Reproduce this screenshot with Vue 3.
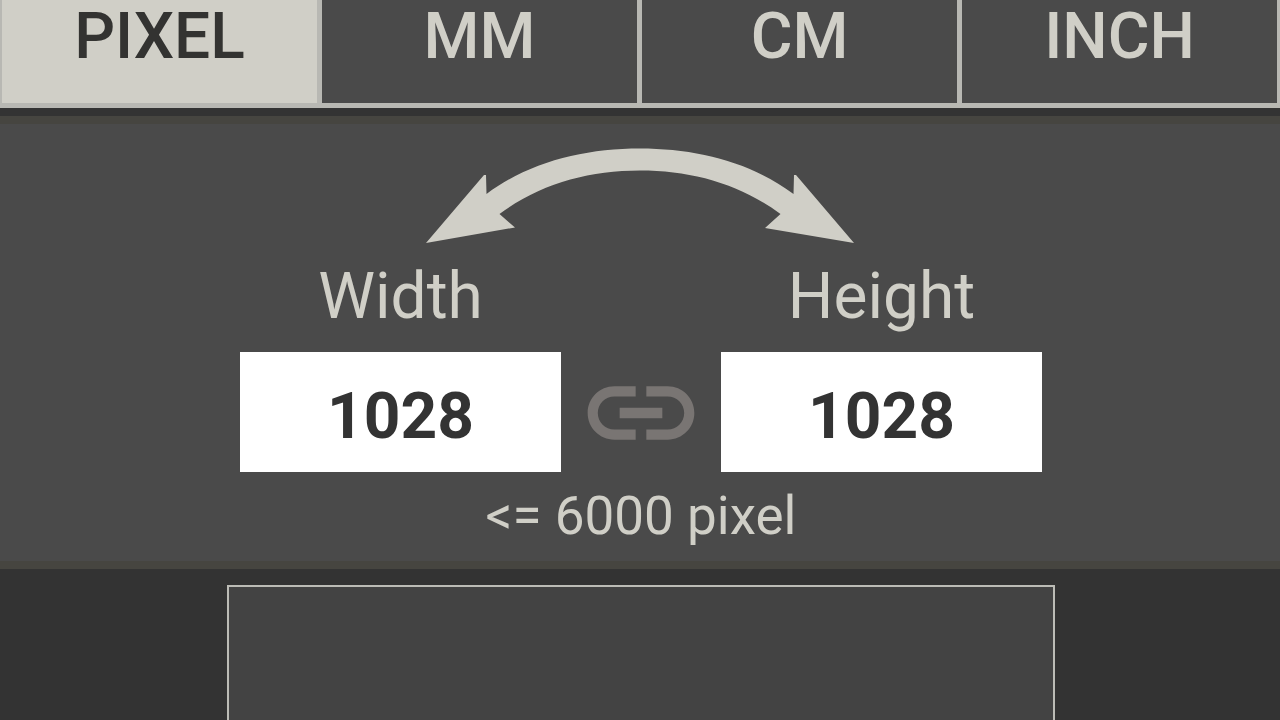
<script setup>
import { ref } from 'vue'

const units = ['PIXEL', 'MM', 'CM', 'INCH']
const unit = ref('PIXEL')
const width = ref('1028')
const height = ref('1028')
const linked = ref(false)

function swap() {
  const previous = width.value
  width.value = height.value
  height.value = previous
}
</script>

<template>
  <main class="page">
    <nav class="units" aria-label="Unit">
      <button
        v-for="name in units"
        :key="name"
        type="button"
        class="unit"
        :class="{ active: unit === name }"
        :aria-pressed="unit === name"
        @click="unit = name"
      >{{ name }}</button>
    </nav>

    <section class="panel">
      <button type="button" class="swap" aria-label="Swap width and height" @click="swap">
        <svg width="428" height="96" viewBox="426 148 428 96" aria-hidden="true">
          <path d="M426 243 L484 175 L486 175 L486.500 194 C529 162 584 148.500 640 148.500 S751 162 793.500 194 L794 175 L796 175 L854 243 L765 228 L780.500 214 C740 184 692 170.500 640 170.500 S540 184 499.500 214 L515 227.500 Z" />
        </svg>
      </button>

      <div class="fields">
        <label class="caption" for="size-width">Width</label>
        <label class="caption second" for="size-height">Height</label>
        <input id="size-width" v-model="width" class="value" type="text" inputmode="numeric" />
        <button type="button" class="link" aria-label="Keep proportions" :aria-pressed="linked" @click="linked = !linked">
          <svg width="128" height="128" viewBox="0 0 24 24" aria-hidden="true">
            <path d="M3.900 12c0-1.710 1.390-3.100 3.100-3.100h4V7H7c-2.760 0-5 2.240-5 5s2.240 5 5 5h4v-1.900H7c-1.710 0-3.100-1.390-3.100-3.100zM8 13h8v-2H8v2zm9-6h-4v1.900h4c1.710 0 3.100 1.390 3.100 3.100s-1.390 3.100-3.100 3.100h-4V17h4c2.760 0 5-2.240 5-5s-2.240-5-5-5z" />
          </svg>
        </button>
        <input id="size-height" v-model="height" class="value" type="text" inputmode="numeric" />
      </div>

      <p class="limit">&lt;= 6000 pixel</p>
    </section>

    <section class="preview" aria-label="Preview">
      <div class="canvas"></div>
    </section>
  </main>
</template>

<style>
body {
  margin: 0;
  background: #333333;
}
</style>

<style scoped>
.page {
  display: flex;
  flex-direction: column;
  min-height: 100vh;
  background: #333333;
  color: #d0cfc7;
  font-family: Roboto, "Liberation Sans", sans-serif;
}

button {
  margin: 0;
  border: 0;
  background: none;
  font-family: inherit;
  cursor: pointer;
}

.units {
  display: grid;
  grid-template-columns: repeat(4, 1fr);
  gap: 5px;
  padding: 0 3px 5px 2px;
  background: #b8b8b3;
}

.unit {
  padding: 5px 0 34px;
  background: #4a4a4a;
  color: #d0cfc7;
  font-size: 64px;
  font-weight: 500;
  line-height: 64px;
}

.unit.active {
  background: #d0cfc7;
  color: #333331;
}

.panel {
  display: flex;
  flex-direction: column;
  margin-top: 8px;
  padding: 24px 0 13px;
  border-top: 8px solid #464540;
  border-bottom: 8px solid #464540;
  background: #4a4a4a;
}

.swap {
  align-self: center;
  padding: 0;
}

svg {
  display: block;
}

.swap svg {
  fill: #d0cfc7;
}

.fields {
  display: grid;
  grid-template-columns: 1fr 160px 1fr;
  row-gap: 23px;
  margin-top: 21px;
  padding: 0 238px 0 240px;
}

.caption {
  font-size: 64px;
  line-height: 64px;
  text-align: center;
}

.caption.second {
  grid-column: 3;
}

.value {
  box-sizing: border-box;
  width: 100%;
  min-width: 0;
  height: 120px;
  margin: 0;
  padding: 8px 0 0;
  border: 0;
  border-radius: 0;
  background: #ffffff;
  color: #333333;
  font-family: inherit;
  font-size: 64px;
  font-weight: 700;
  text-align: center;
}

.link {
  display: flex;
  align-items: center;
  justify-content: center;
  box-sizing: border-box;
  height: 120px;
  padding: 2px 0 0;
}

.link svg {
  flex: none;
  fill: #797573;
}

.limit {
  margin: 12px 0 0;
  padding-left: 2px;
  font-size: 53px;
  line-height: 64px;
  text-align: center;
}

.preview {
  display: flex;
  flex: 1;
  padding: 16px 225px 0 227px;
}

.canvas {
  flex: 1;
  border: 2px solid #bcbcb6;
  border-bottom: 0;
  background: #434343;
}
</style>
